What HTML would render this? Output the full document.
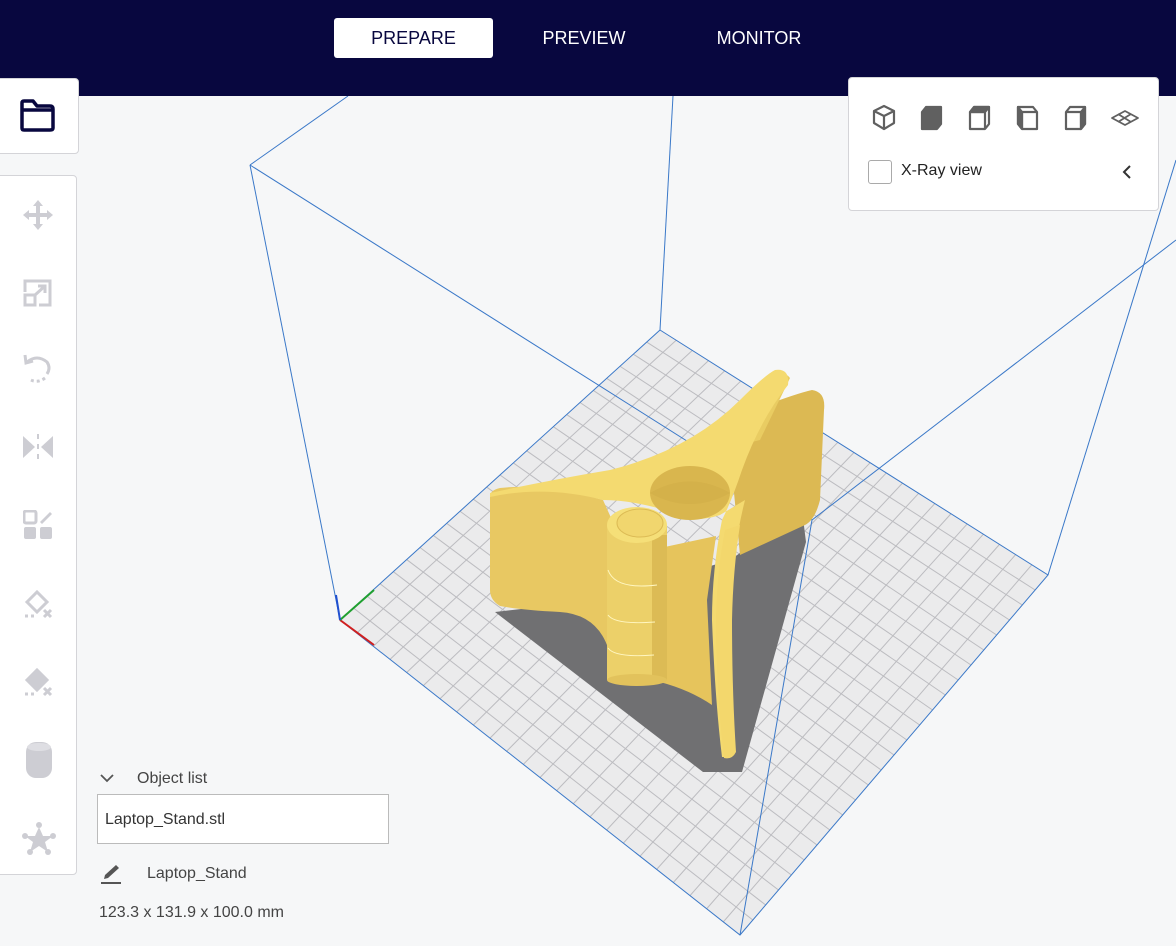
<!DOCTYPE html>
<html><head><meta charset="utf-8"><style>
*{margin:0;padding:0;box-sizing:border-box}
body{width:1176px;height:946px;overflow:hidden;background:#f6f7f8;font-family:"Liberation Sans",sans-serif;position:relative}
.top{position:absolute;left:0;top:0;width:1176px;height:96px;background:#08073f}
.tab{position:absolute;top:18px;height:40px;line-height:41px;font-size:18px;color:#fff;text-align:center}
.tab.on{background:#fff;color:#08073f;border-radius:3px}
.panel{position:absolute;background:#fff;border:1px solid #d4d4d8;border-radius:4px}
.txt{position:absolute;font-size:16px;color:#3a3a3a}
</style></head><body>
<svg width="1176" height="946" style="position:absolute;left:0;top:0">
<g id="grid"><polygon points="660,330 1048,575 740,935 340,620" fill="#ebebec"/></g>
<g stroke="#3a78c8" stroke-width="1" fill="none">
<line x1="250" y1="165" x2="340" y2="620"/>
<line x1="250" y1="165" x2="348" y2="96"/>
<line x1="250" y1="165" x2="812" y2="520"/>
<line x1="660" y1="330" x2="673" y2="96"/>
<line x1="812" y1="520" x2="740" y2="935"/>
<line x1="812" y1="520" x2="1176" y2="240"/>
<line x1="1048" y1="575" x2="1176" y2="160"/>
<polyline points="660,330 1048,575 740,935 340,620 660,330"/>
</g>
<line x1="340" y1="620" x2="374" y2="645" stroke="#d02020" stroke-width="2"/>
<line x1="340" y1="620" x2="374" y2="590" stroke="#20a030" stroke-width="2"/>
<line x1="340" y1="620" x2="336" y2="595" stroke="#2050d0" stroke-width="2"/>
<!-- shadow -->
<polygon points="495,612 703,772 742,772 806,542 803,518 780,525 730,560 600,600" fill="#707072"/>
<!-- back panel -->
<path d="M727,420 Q790,395 812,390 Q826,392 824,410 L820,500 Q815,520 805,525 L740,555Z" fill="#dcb953"/>
<path d="M770,378 Q782,368 790,378 L760,440 L740,445Z" fill="#e9cc62"/>
<!-- left wing face -->
<path d="M490,497 Q490,490 500,488 Q545,483 603,500 L612,520 L612,665 Q605,615 560,612 Q520,610 500,606 Q490,600 490,590Z" fill="#e8c862"/>
<!-- right wing front face -->
<path d="M660,548 L716,536 L707,600 L712,705 Q690,690 660,682Z" fill="#e6c45c"/>
<!-- top Y strip -->
<path d="M490,493 Q550,480 610,470 Q690,450 740,400 Q765,375 775,370 Q790,368 788,385 Q760,420 742,470 Q732,500 722,520 Q712,570 712,620 Q715,700 722,757 L730,757 Q728,680 730,590 Q735,540 745,500 L720,515 Q690,525 665,510 Q630,500 603,500 Q545,485 490,497Z" fill="#f4da70"/>
<path d="M725,530 Q715,580 716,640 Q718,710 724,758 Q732,760 736,752 Q732,690 732,620 Q733,570 740,525Z" fill="#f3d76c"/>
<ellipse cx="690" cy="493" rx="40" ry="27" fill="#d9b64e"/>
<path d="M650,493 Q690,470 730,493 Q690,515 650,493Z" fill="#cfac46" opacity="0.5"/>
<!-- cylinder -->
<rect x="607" y="525" width="60" height="155" fill="#ecd069"/>
<rect x="652" y="535" width="15" height="145" fill="#dcbb55"/>
<ellipse cx="637" cy="680" rx="30" ry="6" fill="#e2c25c"/>
<ellipse cx="637" cy="525" rx="30" ry="18" fill="#f5df78"/>
<ellipse cx="640" cy="523" rx="23" ry="14" fill="#f1d66e" stroke="#dcbb55"/>
<g stroke="#fff6c0" stroke-width="1" fill="none"><path d="M608,570 Q615,590 657,585"/><path d="M608,615 Q615,625 655,622"/><path d="M608,648 Q615,658 654,655"/></g>
</svg>
<script>
(function(){var T=[660,330],R=[1048,575],B=[740,935],L=[340,620],n=24,g=document.getElementById('grid'),s='';
function lp(a,b,t){return[a[0]+(b[0]-a[0])*t,a[1]+(b[1]-a[1])*t]}
for(var i=1;i<n;i++){var t=i/n,a=lp(L,T,t),b=lp(B,R,t),c=lp(L,B,t),d=lp(T,R,t);
s+='<line x1="'+a[0]+'" y1="'+a[1]+'" x2="'+b[0]+'" y2="'+b[1]+'"/><line x1="'+c[0]+'" y1="'+c[1]+'" x2="'+d[0]+'" y2="'+d[1]+'"/>';}
g.insertAdjacentHTML('beforeend','<g stroke="#bcbcc0" stroke-width="1">'+s+'</g>');})();
</script>
<div class="top"></div>
<div class="tab on" style="left:334px;width:159px">PREPARE</div>
<div class="tab" style="left:520px;width:128px">PREVIEW</div>
<div class="tab" style="left:690px;width:138px">MONITOR</div>

<div class="panel" style="left:-4px;top:78px;width:83px;height:76px">
<svg style="position:absolute;left:22px;top:20px" width="36" height="34" viewBox="0 0 36 34"><path d="M3,4 Q3,2 5,2 L14,2 L18,7 L31,7 Q34,7 34,10 L34,29 Q34,31 31,31 L5,31 Q3,31 3,29Z M3,11 L34,11" fill="none" stroke="#08073f" stroke-width="3.5" stroke-linejoin="round"/></svg>
</div>
<div class="panel" style="left:-4px;top:175px;width:81px;height:700px">
<svg style="position:absolute;left:24px;top:22px" width="34" height="34" viewBox="0 0 34 34" fill="#cdcdd3"><path d="M17,2 L22,8 L19,8 L19,15 L26,15 L26,12 L32,17 L26,22 L26,19 L19,19 L19,26 L22,26 L17,32 L12,26 L15,26 L15,19 L8,19 L8,22 L2,17 L8,12 L8,15 L15,15 L15,8 L12,8Z"/></svg>
<svg style="position:absolute;left:26px;top:102px" width="30" height="30" viewBox="0 0 30 30" fill="none" stroke="#cdcdd3" stroke-width="3"><path d="M2,14 L2,3 L27,3 L27,27 L16,27"/><rect x="2" y="17" width="10" height="10"/><path d="M12,17 L22,8 M15,8 L22,8 L22,15"/></svg>
<svg style="position:absolute;left:24px;top:176px" width="32" height="34" viewBox="0 0 32 34" fill="none" stroke="#cdcdd3" stroke-width="3"><path d="M6,10 Q16,2 26,10 Q30,16 26,22" /><path d="M4,3 L5,11 L12,9"/><path d="M24,26 Q16,32 8,27" stroke-dasharray="3 3"/></svg>
<svg style="position:absolute;left:24px;top:256px" width="34" height="30" viewBox="0 0 34 30" fill="#cdcdd3"><path d="M2,4 L14,15 L2,26Z M32,4 L20,15 L32,26Z"/><rect x="16" y="2" width="2" height="5"/><rect x="16" y="12" width="2" height="5"/><rect x="16" y="22" width="2" height="5"/></svg>
<svg style="position:absolute;left:26px;top:334px" width="30" height="30" viewBox="0 0 30 30" fill="#cdcdd3"><rect x="1" y="1" width="12" height="12" rx="2" fill="none" stroke="#cdcdd3" stroke-width="3"/><rect x="1" y="17" width="12" height="12" rx="2"/><rect x="17" y="17" width="12" height="12" rx="2"/><path d="M17,12 L27,2 L29,4 L19,14Z"/></svg>
<svg style="position:absolute;left:26px;top:412px" width="32" height="32" viewBox="0 0 32 32" fill="none" stroke="#cdcdd3" stroke-width="3"><path d="M4,14 L14,4 L24,14 L14,24Z"/><path d="M2,28 L12,28" stroke-dasharray="3 3"/><path d="M21,22 L28,29 M28,22 L21,29"/></svg>
<svg style="position:absolute;left:26px;top:490px" width="32" height="32" viewBox="0 0 32 32" fill="none" stroke="#cdcdd3" stroke-width="3"><path d="M4,14 L14,4 L24,14 L14,24Z" fill="#cdcdd3"/><path d="M2,28 L12,28" stroke-dasharray="3 3"/><path d="M21,22 L28,29 M28,22 L21,29"/></svg>
<svg style="position:absolute;left:28px;top:565px" width="28" height="38" viewBox="0 0 28 38"><rect x="1" y="1" width="26" height="36" rx="10" fill="#cdcdd3"/><ellipse cx="14" cy="6" rx="12" ry="4" fill="#dedee3"/></svg>
<svg style="position:absolute;left:24px;top:645px" width="36" height="36" viewBox="0 0 36 36" fill="#cdcdd3"><path d="M18,6 L22,15 L32,15 L24,21 L27,31 L18,25 L9,31 L12,21 L4,15 L14,15Z"/><circle cx="18" cy="4" r="3"/><circle cx="4" cy="15" r="3"/><circle cx="32" cy="15" r="3"/><circle cx="9" cy="31" r="3"/><circle cx="27" cy="31" r="3"/></svg>
</div>

<div class="panel" style="left:848px;top:77px;width:311px;height:134px;border-radius:4px">
<svg style="position:absolute;left:22px;top:26px" width="270" height="28" viewBox="0 0 270 28" fill="#606060" stroke="#606060" stroke-width="2.2" stroke-linejoin="round">
<path d="M13,2 L23,7 L23,19 L13,25 L3,19 L3,7Z M3,7 L13,12 L23,7 M13,12 L13,25" fill="none"/>
<g transform="translate(48,0)"><path d="M7,3 L22,3 L22,20 L18,25 L3,25 L3,8Z" /></g>
<g transform="translate(96,0)"><path d="M7,3 L22,3 L22,20 L18,25 L3,25 L3,8Z M3,8 L18,8 L18,25 M18,8 L22,3" fill="none"/><path d="M7,3 L22,3 L18,8 L3,8Z"/></g>
<g transform="translate(144,0)"><path d="M3,3 L18,3 L22,8 L22,25 L7,25 L3,20Z M7,8 L22,8 M7,8 L7,25" fill="none"/><path d="M3,3 L7,8 L7,25 L3,20Z"/></g>
<g transform="translate(192,0)"><path d="M7,3 L22,3 L22,20 L18,25 L3,25 L3,8Z M3,8 L18,8 L18,25" fill="none"/><path d="M18,8 L22,3 L22,20 L18,25Z"/></g>
<g transform="translate(240,0)" stroke-width="1.8"><path d="M14,7 L27,14 L14,21 L1,14Z M7,10 L20,18 M20,10 L7,18" fill="none"/></g>
</svg>
<div style="position:absolute;left:19px;top:82px;width:24px;height:24px;border:1px solid #aaa;border-radius:3px"></div>
<div class="txt" style="left:52px;top:84px;color:#222">X-Ray view</div>
<svg style="position:absolute;left:272px;top:86px" width="12" height="16"><path d="M9,2 L3,8 L9,14" fill="none" stroke="#333" stroke-width="2"/></svg>
</div>

<svg style="position:absolute;left:99px;top:772px" width="16" height="12"><path d="M2,3 L8,9 L14,3" fill="none" stroke="#555" stroke-width="1.8"/></svg>
<div class="txt" style="left:137px;top:770px;color:#444">Object list</div>
<div style="position:absolute;left:97px;top:794px;width:292px;height:50px;border:1px solid #bbb;background:#fff"></div>
<div class="txt" style="left:105px;top:811px;color:#333">Laptop_Stand.stl</div>
<svg style="position:absolute;left:100px;top:863px" width="24" height="22"><path d="M4,16 L5,12 L16,2 L19,5 L8,15Z" fill="#555"/><rect x="1" y="19" width="20" height="2" fill="#555"/></svg>
<div class="txt" style="left:147px;top:865px;color:#444">Laptop_Stand</div>
<div class="txt" style="left:99px;top:904px;color:#444">123.3 x 131.9 x 100.0 mm</div>
</body></html>
